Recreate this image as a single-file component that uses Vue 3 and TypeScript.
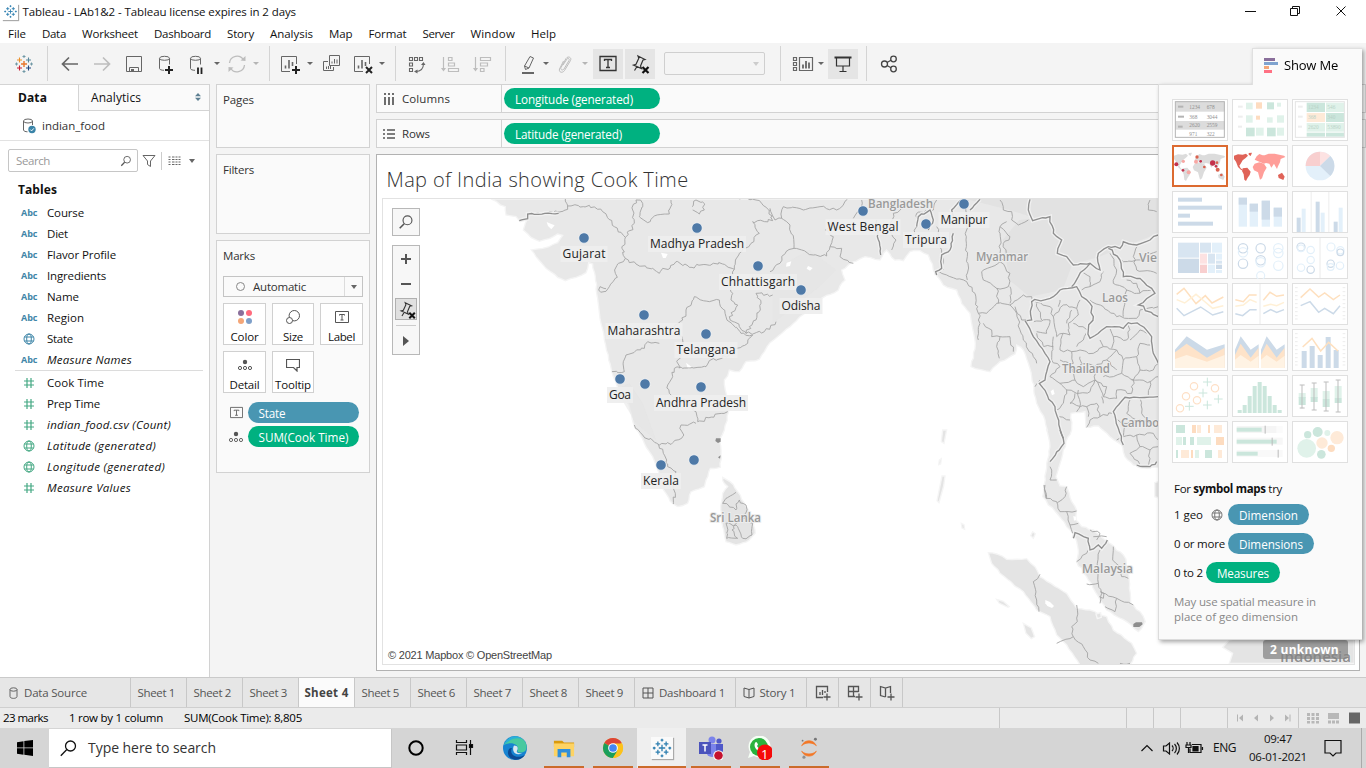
<script setup lang="ts">
type Pt = [number, number]

// Spreads the letters of an element so that its text takes the given width.
const vFit = {
  mounted(el: HTMLElement, b: { value: number }) {
    const n = (el.textContent || '').trim().length
    const w = el.getBoundingClientRect().width
    if (b.value && n) el.style.letterSpacing = ((b.value - w) / n).toFixed(3) + 'px'
  },
}

const menus: [string, number][] = [
  ['File', 18], ['Data', 24], ['Worksheet', 56], ['Dashboard', 57], ['Story', 27], ['Analysis', 43],
  ['Map', 23.5], ['Format', 38], ['Server', 32], ['Window', 44.5], ['Help', 25],
]

interface Tool { id: string; w: number; dim?: boolean; on?: boolean }
const tools: Tool[] = [
  { id: 'logo', w: 47 }, { id: 'sep', w: 1 }, { id: 'gap', w: 6 },
  { id: 'back', w: 32 }, { id: 'forward', w: 32, dim: true }, { id: 'save', w: 32 }, { id: 'dbplus', w: 32 },
  { id: 'dbpause', w: 30 }, { id: 'gap', w: 1 }, { id: 'caret', w: 8 }, { id: 'refresh', w: 31, dim: true }, { id: 'caret', w: 8, dim: true },
  { id: 'gap', w: 9 }, { id: 'sep', w: 1 }, { id: 'gap', w: 5 },
  { id: 'newsheet', w: 30 }, { id: 'gap', w: 1 }, { id: 'caret', w: 8 }, { id: 'dup', w: 34 }, { id: 'clear', w: 29 }, { id: 'gap', w: 1 }, { id: 'caret', w: 8 },
  { id: 'gap', w: 9 }, { id: 'sep', w: 1 }, { id: 'gap', w: 5 },
  { id: 'swap', w: 32 }, { id: 'sortup', w: 33, dim: true }, { id: 'sortdown', w: 32, dim: true },
  { id: 'gap', w: 7 }, { id: 'sep', w: 1 }, { id: 'gap', w: 6 },
  { id: 'pen', w: 31 }, { id: 'caret', w: 6 }, { id: 'clip', w: 32, dim: true }, { id: 'caret', w: 8, dim: true },
  { id: 'gap', w: 4 }, { id: 'label', w: 30, on: true }, { id: 'gap', w: 2 }, { id: 'pin', w: 30, on: true },
  { id: 'gap', w: 9 }, { id: 'combo', w: 101 }, { id: 'gap', w: 15 }, { id: 'sep', w: 1 }, { id: 'gap', w: 7 },
  { id: 'cards', w: 30 }, { id: 'caret', w: 6 }, { id: 'gap', w: 4 }, { id: 'present', w: 30, on: true },
  { id: 'gap', w: 8 }, { id: 'sep', w: 1 }, { id: 'gap', w: 7 }, { id: 'share', w: 30 },
]

interface Field { t: string; w: number; k: string; i?: boolean }
const dims: Field[] = [
  { t: 'Course', w: 37, k: 'abc' }, { t: 'Diet', w: 21, k: 'abc' }, { t: 'Flavor Profile', w: 69, k: 'abc' },
  { t: 'Ingredients', w: 59, k: 'abc' }, { t: 'Name', w: 32, k: 'abc' }, { t: 'Region', w: 37, k: 'abc' },
  { t: 'State', w: 26, k: 'globe' }, { t: 'Measure Names', w: 85, k: 'abc', i: true },
]
const meas: Field[] = [
  { t: 'Cook Time', w: 57, k: 'hash' }, { t: 'Prep Time', w: 53, k: 'hash' },
  { t: 'indian_food.csv (Count)', w: 124, k: 'hash', i: true }, { t: 'Latitude (generated)', w: 109, k: 'globe', i: true },
  { t: 'Longitude (generated)', w: 118, k: 'globe', i: true }, { t: 'Measure Values', w: 84, k: 'hash', i: true },
]
const marks: [string, string, number][] = [
  ['color', 'Color', 28], ['size', 'Size', 20], ['tbox', 'Label', 27], ['detail', 'Detail', 30], ['tip', 'Tooltip', 36],
]
const sheets = [1, 2, 3, 4, 5, 6, 7, 8, 9]

// ---- Map geometry: thirds of a pixel, measured from the sheet's corner ----
function pts(s: string, dx = 0, dy = 0): Pt[] {
  return s.trim().split(/\s+/).map((p) => {
    const [x, y] = p.split(',').map(Number)
    return [x + dx, y + dy] as Pt
  })
}
let seed = 7
function rnd() {
  seed = (seed * 16807) % 2147483647
  return seed / 2147483647 - 0.5
}
function rough(list: Pt[], step: number, amp: number): string {
  let d = `M${list[0][0]} ${list[0][1]}`
  for (let i = 1; i < list.length; i++) {
    const [ax, ay] = list[i - 1]
    const [bx, by] = list[i]
    const len = Math.hypot(bx - ax, by - ay)
    const n = Math.max(1, Math.round(len / step))
    for (let k = 1; k < n; k++) {
      d += `L${(ax + ((bx - ax) * k) / n + rnd() * amp).toFixed(1)} ${(ay + ((by - ay) * k) / n + rnd() * amp).toFixed(1)}`
    }
    d += `L${bx} ${by}`
  }
  return d
}
const E = 1182
const S = 1452
const mainland = rough([
  ...pts(`345,27 362,35 388,50 390,75 420,80 430,92 455,85 448,100 442,120 465,142 490,154 520,146 545,132 560,136 545,158 500,175
    466,180 480,200 510,235 545,262 568,272 600,262 630,248 638,218 650,222 658,260 662,310 668,350 675,400 685,450 698,510 708,548 722,585
    745,620 762,660 772,700 805,760 830,800 850,860 870,910 892,942 905,950 935,940 945,905 985,890 990,870 1003,835 1033,832
    1035,795 1030,750 1045,720 1058,665 1048,600 1045,570 1060,540 1090,545 1110,515 1150,508 1165,485`),
  ...pts(`0,458 60,410 120,355 155,325 205,300 225,270 215,240 235,225 285,200 330,210 350,180 375,210 400,212 420,185 450,182 475,195
    490,240 520,285 560,300 575,340 600,370 605,400 616,460 603,530 660,545 690,515 735,492 740,465 760,480 775,520 785,560 800,640
    825,690 832,720`, E),
  ...pts(`560,0 570,50 560,100 556,150 548,200 565,225 595,255 620,290 645,320 655,360 650,395 685,450 715,500 740,540 800,575 835,605
    856,575 840,545 812,520 808,420 790,375 740,335 700,300 665,290 648,270 650,240 635,215 620,170 600,168 588,140 610,60 635,0`, S, 720),
  ...pts('905,720 903,670 945,665 948,712 985,708 1020,740 1055,765 1065,800 1090,825 1130,835 1185,830 1185,27', E),
], 14, 5) + 'Z'
const islands = [
  rough(pts('1040,862 1062,875 1085,905 1110,950 1130,985 1138,1030 1120,1050 1080,1065 1050,1055 1040,1010 1034,960 1040,910 1055,890 1040,872'), 12, 4) + 'Z',
  rough(pts(`385,368 410,372 440,388 500,386 525,410 540,440 620,490 650,535 690,540 740,560 760,600 815,640 830,670 810,705 660,705 620,645
    590,615 570,560 530,540 490,485 420,430 395,400`, S, 720), 14, 4) + 'Z',
  'M1970 1025l8 6-6 14-8-8z', 'M1698 858l9 0-4 30-14 50-6-6z', 'M1700 720l12 0-8 40-8-5z', 'M1690 810l6-4-2 16-6 2z', 'M1756 1000l8 4 2 14-8-4z',
  'M1862 1228l20 6 18 16-4 2-26-12z', 'M1942 1300l24 14 10 26-10 6-16-16z', 'M2160 1272l14-4 2 14-12 4z',
  'M2612 1340L2660 1344 2700 1336 2735 1345 2935 1345 2935 1420 2560 1420 2570 1390 2540 1372 2560 1350z',
  'M2336 878l12-4v50l-12-4z',
]
const holes = [
  'M512 96l14 6 10 4-10 12-10-10z', 'M855 188l20 4-6 12-8 0z', 'M930 518l18 14-12 6z', 'M1232 218l14-4-4 14-12 2z', 'M1296 228l14 6-8 8-10-6z',
  'M2008 1230l14 6 12 12-6 6-14-6-6-8z', 'M2024 604l8-6 4 14-8 4z', 'M2092 978l8 2 0 10-6 2z',
]
const states = [
  '430,92 452,88 455,70 500,70 550,66 575,58 568,27', '575,48 640,46 680,65 715,110 748,142 738,175 748,205 725,222 718,250 724,262 700,290 690,304 668,300 672,290 690,296',
  '748,142 775,100 770,60 780,30 800,40 790,80 815,98 835,78 880,72 885,30', '748,205 780,222 830,235 850,250 900,215 940,232 990,224 1040,222 1075,238 1090,190 1125,160 1150,130 1130,95 1190,92 1180,60 1140,30 1090,27',
  '948,50 960,30 980,36 985,60 970,72 950,60', '1075,238 1055,275 1070,310 1065,330 1085,345 1060,380 1090,410 1110,430 1140,390 1155,340 1140,310 1190,315',
  '1110,430 1165,425 1200,395', '955,320 1000,335 1030,330 1050,380 1095,430 1130,435 1115,460 1080,475 1060,495 1000,512 990,530 920,535 895,535 890,560 875,585 880,610',
  '955,320 930,360 920,390 895,410 920,450 915,490 905,510 910,535', '850,460 815,455 805,475 750,495 742,515 745,545 708,545', '880,610 940,640 960,665 965,695 1055,665', '775,705 800,735 850,765 890,758 920,740 915,705 960,700',
  '848,765 862,790 875,830 900,845 893,880 898,910 892,942', '1080,907 1050,925 1040,940 1080,960 1090,930 1110,945 1105,985 1080,1000 1068,1020 1085,1045', '1105,985 1130,1000 1128,1035 1100,1045 1085,1010 1050,1000 1052,1045 1085,1045',
]
const eastStates = [
  '0,55 15,90 35,85 40,50 100,60 150,50 200,60 232,28', '35,85 60,105 72,175 48,185 30,220 0,245', '72,175 130,195 170,198 180,170 215,175 210,200 250,220', '180,170 190,140 165,120 185,95', '250,85 270,60 275,30',
  '365,180 378,150 360,120 370,70 400,50 400,30', '420,160 440,110 440,70 490,60 500,30', '500,110 515,190 520,240', '590,30 588,150 592,200 592,270', '497,245 530,255 590,275 615,310 625,370 650,370 680,340 720,345 760,315 785,320 785,350', '625,370 630,400 625,450',
  '640,400 665,420 665,440 690,440 720,440 730,485', '690,440 680,470 688,505', '690,30 700,60 725,65 725,90 745,105 775,90', '690,200 690,110 710,95', '690,110 720,140 700,160 712,200 690,215 720,250 715,290 680,295 640,270 635,245 690,215', '680,295 685,340',
  '720,345 740,370 760,450 790,500 800,520', '720,290 720,340', '735,350 755,390 770,390', '790,330 840,350 850,380 880,345 920,355 930,330', '790,395 840,390 830,430 800,425', '850,380 860,440 880,430 900,435 895,400 925,375 920,355', '850,440 845,510', '880,430 870,480 905,485 910,520 870,510', '910,400 960,420 940,450 920,470',
  '905,485 930,480 970,490 1000,470 990,450', '845,510 870,530 840,560 870,580 915,570 905,540 940,520 975,530 975,570 940,590 915,570', '870,580 890,600 880,640 860,660', '890,600 920,610 960,605 975,570 1000,620 1040,625', '915,610 900,640 950,650 980,640 990,680 1030,670', '925,600 930,650 920,665', '990,680 960,690 950,712', '1010,410 1030,440 1070,450 1080,400',
  '1000,470 1040,480 1060,510 1100,500 1110,460 1150,470', '1060,510 1055,550 1090,570 1110,540 1100,500', '1110,540 1150,540 1165,520', '1090,570 1085,610 1040,600 1040,625', '1085,570 1140,575 1165,560', '1140,575 1135,615', '975,530 1010,510 1040,480', '1080,450 1110,420 1130,430',
  '935,300 960,290 990,275 1000,245', '930,240 960,260 960,290', '960,330 1000,350 1040,380 1100,385 1110,360 1165,350', '1020,190 1040,240 1030,280 1070,300 1065,330 1060,380', '1070,300 1100,310 1150,300', '1070,270 1100,280 1110,310', '1035,190 1060,215 1100,210 1160,185', '1110,160 1090,200 1100,240 1160,250', '1140,30 1135,60 1160,65',
  '1030,680 1060,700 1060,740 1040,750', '1060,700 1100,690 1140,700 1165,690', '1080,630 1070,670 1100,690', '1110,625 1115,670 1140,700', '1060,740 1100,735 1110,770 1080,790 1110,825', '1100,735 1150,730 1165,750', '1110,770 1140,780 1165,770', '1140,780 1135,830', '860,680 900,690', '795,590 810,570',
  '800,430 820,470 850,470', '930,500 935,520', '1030,440 1025,475', '1000,560 1030,560 1055,550', '1000,620 1010,590 975,570', '1040,540 1010,510', '950,650 955,680', '1000,640 995,620', '800,340 815,390', '905,360 890,400', '870,330 865,350',
]
const southStates = [
  '570,110 575,130 570,150 590,150', '555,165 558,205 590,215 600,245 650,243', '620,170 615,200 592,218', '620,245 630,285 655,280', '630,285 638,310', '560,205 552,165', '650,395 680,370 690,355', '720,360 712,400 715,460 680,462', '715,460 725,490 720,520', '725,488 770,505 820,525',
  '770,505 765,545 735,530', '760,350 758,390 780,410 785,440 805,445', '690,300 720,310 710,330', '700,320 740,320', '540,433 520,455 530,510 537,545', '650,525 652,575 635,590 640,620 590,640', '640,620 670,650 690,690 715,700', '780,700 810,700', '720,485 732,490 730,505 718,500',
]
const nations = [
  rough(pts('780,28 775,60 788,92 840,80 850,130 875,150 862,190 890,200 910,225 960,220 990,240 985,190 1015,170 1050,175 1060,155 1100,165 1140,150 1165,135', E), 14, 8),
  rough(pts('770,392 785,390 785,335 850,320 870,300 920,290 935,320 960,340 970,380 955,420 960,445 1010,410 1060,415 1075,398 1110,405 1145,440 1150,490 1165,520', E), 14, 8),
  rough(pts('1015,175 1050,210 1060,260 1110,265 1145,295 1155,310 1105,345 1165,380', E), 14, 8), rough(pts('960,220 925,260 905,290', E), 12, 6),
  rough(pts('765,392 790,440 825,490 840,515 825,570 808,580 855,650 880,745', E), 14, 6), rough(pts('600,0 612,40 570,95', S, 720), 12, 4), rough(pts('640,325 645,308 685,325 690,360 715,345 725,355 742,330', S, 720), 10, 5),
  rough(pts('1165,620 1065,622 1030,665 1045,715 1060,765', E), 14, 5), rough(pts('320,90 322,140 332,195', E), 10, 6), rough(pts('550,130 540,180 515,195 515,235 497,245 500,255', E), 10, 6), rough(pts('560,100 545,60 575,30', E), 10, 5), rough(pts('600,60 630,28', E), 10, 5),
  rough(pts('440,110 445,80 480,60 490,90 475,120', E), 10, 6), rough(pts('430,92 455,86 455,72 548,70', 0), 10, 4), rough(pts('830,105 870,110 890,95', S, 720), 10, 6),
]
const lines = [
  ...states.map((s) => rough(pts(s), 9, 10)), ...eastStates.map((s) => rough(pts(s, E), 11, 8)), ...southStates.map((s) => rough(pts(s, S, 720), 12, 6)),
]
const places: [string, number, number, number][] = [
  ['Bangladesh', 868, 208, 65], ['Myanmar', 976, 261, 52], ['Laos', 1102, 302, 26], ['Vie', 1139, 262, 18], ['Thailand', 1062, 373, 48],
  ['Cambo', 1121, 427, 38], ['Sri Lanka', 710, 522, 51], ['Malaysia', 1082, 573, 51], ['Indonesia', 1280, 662, 71],
]
// name, dot x, dot y, text width
const dots: [string, number, number, number][] = [
  ['Gujarat', 584, 238, 43], ['Madhya Pradesh', 697, 228, 94], ['Chhattisgarh', 758, 266, 74], ['Odisha', 801, 290, 39], ['West Bengal', 863, 211, 71],
  ['Tripura', 926, 224, 42], ['Manipur', 964, 204, 47], ['Maharashtra', 644, 315, 73], ['Telangana', 706, 334, 59], ['Goa', 620, 379, 22],
  ['', 645, 384, 0], ['Andhra Pradesh', 701, 387, 90], ['Kerala', 661, 465, 36], ['', 694, 460, 0],
]

// ---- Show Me thumbnails, each on a 168 × 126 grid ----
type R = [number, number, number, number, string]
const B = '#ccdae8', L = '#e3f0fa', G = '#cbe6dc', g = '#e0f2ea', O = '#fddcc0', o = '#feead8', P = '#f8cfcf', p = '#fde2e2'
const rects: Record<number, R[]> = {
  0: [[10, 8, 148, 30, '#dcdcdc'], [10, 66, 148, 26, '#dcdcdc'], [18, 20, 16, 6, '#b4b4b4'], [18, 50, 18, 6, '#b4b4b4'], [18, 80, 14, 6, '#b4b4b4']],
  1: [[18, 20, 14, 6, '#eee'], [18, 50, 14, 6, '#eee'], [18, 80, 12, 6, '#eee'], [42, 11, 20, 20, g], [72, 10, 18, 19, O], [105, 10, 21, 21, G], [135, 11, 12, 12, g], [42, 49, 20, 22, g], [72, 50, 12, 12, O], [105, 55, 17, 16, g], [135, 49, 21, 22, g], [42, 86, 26, 26, G], [72, 86, 23, 24, g], [105, 86, 26, 26, G], [135, 86, 21, 24, g]],
  2: [[18, 20, 14, 6, '#eee'], [18, 50, 14, 6, '#eee'], [18, 80, 12, 6, '#eee'], [44, 11, 55, 28, G], [102, 11, 54, 28, g], [44, 42, 55, 27, o], [102, 42, 54, 27, G], [44, 72, 55, 26, g], [102, 72, 54, 26, g], [44, 101, 55, 12, G], [102, 101, 54, 12, G]],
  6: [[18, 20, 72, 12, B], [18, 44, 132, 12, B], [18, 68, 36, 12, B], [18, 92, 105, 12, B]],
  7: [[20, 20, 25, 87, L], [20, 20, 25, 21, B], [53, 38, 25, 69, L], [53, 38, 25, 24, B], [89, 29, 25, 78, L], [89, 29, 25, 57, B], [125, 50, 25, 57, L], [125, 50, 25, 27, B]],
  8: [[56, 3, 3, 120, '#eee'], [109, 3, 3, 120, '#eee'], [14, 80, 12, 43, B], [29, 53, 12, 70, L], [71, 32, 12, 91, B], [86, 65, 12, 58, L], [125, 92, 12, 31, B], [140, 50, 12, 73, L]],
  9: [[18, 17, 63, 45, '#d8e5f1'], [18, 65, 63, 43, B], [84, 17, 33, 30, '#d8e5f1'], [120, 17, 30, 30, L], [84, 50, 21, 30, p], [108, 50, 21, 30, '#d8e5f1'], [132, 50, 18, 18, L], [132, 71, 18, 9, '#d8e5f1'], [84, 83, 21, 25, P], [108, 83, 21, 25, L], [132, 83, 18, 13, B], [132, 99, 18, 9, L]],
  17: [[29, 66, 15, 51, B], [53, 51, 15, 66, B], [77, 78, 15, 39, B], [101, 24, 15, 93, B], [125, 63, 15, 54, B]],
  19: [[17, 105, 12, 9, G], [32, 90, 12, 24, G], [47, 63, 12, 51, G], [62, 33, 12, 81, G], [77, 21, 12, 93, G], [92, 33, 12, 81, G], [107, 63, 12, 51, G], [122, 90, 12, 24, G], [137, 105, 12, 9, G]],
  20: [[20, 54, 21, 15, g], [20, 66, 21, 24, G], [56, 39, 21, 30, g], [56, 66, 21, 15, G], [92, 48, 21, 24, g], [92, 72, 21, 24, G], [128, 33, 21, 36, g], [128, 69, 21, 15, G]],
  21: [[12, 12, 27, 24, G], [60, 12, 12, 24, O], [75, 12, 12, 24, o], [108, 12, 6, 24, O], [126, 12, 24, 24, o], [12, 48, 18, 24, g], [33, 48, 9, 24, G], [54, 48, 12, 24, G], [75, 48, 42, 24, g], [132, 48, 24, 24, O], [12, 87, 6, 24, G], [27, 87, 24, 24, o], [57, 87, 6, 24, O], [69, 87, 12, 24, g], [99, 87, 21, 24, G], [138, 87, 12, 24, o]],
  22: [[14, 15, 120, 21, '#f5f5f5'], [134, 15, 18, 21, '#fbfbfb'], [14, 50, 138, 21, '#f7f7f7'], [14, 87, 138, 21, '#f9f9f9'], [14, 20, 75, 12, G], [14, 56, 120, 12, G], [14, 92, 63, 12, G], [98, 14, 3, 24, '#bbb'], [119, 50, 3, 24, '#bbb'], [137, 86, 3, 24, '#bbb']],
}
type Ln = [string, string]
const strokes: Record<number, Ln[]> = {
  12: [['14,34 36,16 72,62 100,38 120,60 154,42', '#fee0bf'], ['14,50 38,60 72,34 96,54 122,76 154,68', '#fff0d6'], ['14,76 36,98 86,72 122,96 154,86', B]],
  13: [['10,50 34,56 52,36 74,36', '#fee0bf'], ['94,52 114,28 134,40 156,36', '#fee0bf'], ['10,70 34,66 54,50 74,58', '#fff0d6'], ['94,70 116,64 134,68 156,58', '#fff0d6'], ['10,92 32,98 54,80 74,80', B], ['94,92 116,80 134,88 156,80', B]],
  14: [['26,44 54,18 80,42 98,30 124,50 144,36', '#fee0bf'], ['26,68 54,56 80,88 98,76 124,92 144,68', B]],
  17: [['32,54 60,28 86,66 110,40 138,66', '#fee0bf']],
}
const areas: Record<number, Ln[]> = {
  15: [['9,62 44,22 105,62 158,46 158,117 9,117', B], ['9,70 44,44 105,86 158,56 158,117 9,117', '#fee3c9'], ['9,90 44,78 105,98 158,78 158,117 9,117', '#fff3e4']],
  16: [['9,62 26,22 56,62 80,46 80,117 9,117', B], ['87,62 104,22 134,62 158,46 158,117 87,117', B], ['9,78 26,44 56,86 80,56 80,117 9,117', '#fee3c9'], ['87,78 104,44 134,86 158,56 158,117 87,117', '#fee3c9'], ['9,92 26,78 56,98 80,80 80,117 9,117', '#fff3e4'], ['87,92 104,78 134,98 158,80 158,117 87,117', '#fff3e4']],
}
type C = [number, number, number, string]
const rings: Record<number, C[]> = {
  10: [[33, 34, 14, B], [33, 46, 14, L], [86, 34, 14, B], [139, 34, 14, L], [139, 48, 14, L], [33, 80, 14, B], [86, 70, 14, B], [86, 76, 14, L], [139, 86, 14, L], [86, 116, 12, L]],
  11: [[27, 30, 12, B], [27, 34, 10, L], [56, 39, 11, L], [117, 30, 12, L], [145, 40, 11, L], [145, 46, 10, B], [56, 69, 11, L], [27, 92, 11, L], [56, 98, 11, B], [116, 80, 11, B], [144, 86, 11, L], [116, 90, 10, L]],
  18: [[66, 34, 11, '#fee0c6'], [129, 40, 11, '#fee0c6'], [42, 64, 11, '#fee0c6'], [75, 76, 11, '#fee0c6'], [24, 100, 11, '#fee0c6']],
}
const discs: Record<number, C[]> = {
  3: [[13, 58, 6, '#c4314b'], [34, 49, 5, '#f7a8a4'], [75, 36, 5, '#d9624f'], [72, 50, 6, '#f7a8a4'], [86, 49, 4, '#c4314b'], [122, 54, 8, '#c4314b'], [135, 53, 4, '#d9624f'], [137, 74, 6, '#d9624f'], [132, 64, 4, '#c4314b'], [148, 90, 4, '#d9624f'], [97, 66, 4, '#d9624f'], [33, 76, 4, '#c4314b'], [50, 82, 6, '#f7a8a4']],
  23: [[44, 82, 28, g], [47, 41, 11, G], [77, 33, 15, G], [106, 36, 9, g], [135, 50, 20, o], [90, 66, 17, '#feead8'], [118, 82, 11, O], [88, 100, 13, G]],
}
const crosses: Pt[] = [[106, 21], [93, 54], [139, 72], [52, 94], [106, 90]]
const continents = [
  'M6 32l12-4 14 1 10-3 6 6-8 8-8 6-6 10-4 6 4 8 6 4-4 2-10-10-6-16-6-8z', 'M50 24l10-1-4 10-6-4z', 'M32 70l14-2 10 12-3 10-6 8-5 10-5-4-2-16-5-10z',
]
const continents2 = [
  'M68 44l6-10 8-7 10 4 6 0 12-5 18 0 28 6 4 4-14 6-2 10-6 12-3 8-5-8-4-8-8 12-6-12-10-2-6 2z', 'M68 56l14-4 14 4 8 12-8 14-6 18-6 4-6-22-12-6-4-10z', 'M138 90l12-7 8 12-4 10-14-6z',
]
const ticks = [14, 26, 38, 50, 62, 74, 86, 98, 108]
const apps: [string, boolean][] = [['edge', false], ['folder', true], ['chrome', true], ['tableau', true], ['teams', true], ['whatsapp', true], ['jupyter', true]]
</script>

<template>
  <div class="screen">
    <svg class="defs">
      <symbol id="logo" viewBox="0 0 24 24">
        <path d="M9 12h6M12 9v6" stroke="#e8762c" stroke-width="1.4" />
        <path d="M5 8h5M7.5 5.5v5" stroke="#eb912c" stroke-width="1.1" /><path d="M14 8h5M16.500 5.500v5" stroke="#59879b" stroke-width="1.1" />
        <path d="M5 16h5M7.500 13.500v5" stroke="#c72035" stroke-width="1.1" /><path d="M14 16h5M16.500 13.500v5" stroke="#1f457e" stroke-width="1.1" />
        <path d="M10.500 4.500h3M12 3v3M10.500 19.500h3M12 18v3M3 12h3M4.500 10.500v3M18 12h3M19.500 10.500v3" stroke="#7199a6" stroke-width="1" />
      </symbol>
      <symbol id="logoblue" viewBox="0 0 24 24">
        <g stroke="#2e7fb0" stroke-width="1.400"><path d="M8.500 12h7M12 8.500v7M5 7.500h5M7.500 5v5M14 7.500h5M16.500 5v5M5 16.500h5M7.500 14v5M14 16.500h5M16.500 14v5M10.500 3.500h3M12 2v3M10.500 20.500h3M12 19v3M2 12h3M3.500 10.500v3M19 12h3M20.500 10.500v3" /></g>
      </symbol>
      <symbol id="back" viewBox="0 0 24 24"><path d="M4.500 12H20M11 5.500L4.500 12l6.500 6.500" stroke-width="1.700" /></symbol>
      <symbol id="forward" viewBox="0 0 24 24"><path d="M19.500 12H4M13 5.500l6.500 6.500-6.500 6.500" stroke-width="1.700" /></symbol>
      <symbol id="save" viewBox="0 0 24 24"><path d="M4.500 4.500h15v15h-15zM7.500 19.500v-4h9v4" /><path d="M9 17h3v3H9z" fill="currentColor" stroke="none" /></symbol>
      <symbol id="cyl" viewBox="0 0 24 24"><path d="M5.500 6.500v10c0 1 2 1.800 4.500 1.800M15.500 6.500v6" /><ellipse cx="10.500" cy="6.300" rx="5" ry="2" /></symbol>
      <symbol id="dbplus" viewBox="0 0 24 24"><use href="#cyl" /><path d="M15 14v8M11 18h8" stroke="#222" stroke-width="2" /></symbol>
      <symbol id="dbpause" viewBox="0 0 24 24"><use href="#cyl" /><path d="M13 15.500v6.500M16.500 15.500v6.500" stroke="#222" stroke-width="1.800" /></symbol>
      <symbol id="refresh" viewBox="0 0 24 24"><path d="M4.500 11A7.500 7.500 0 0 1 18.500 8M19.500 13A7.500 7.500 0 0 1 5.500 16" stroke-width="1.300" /><path d="M15.500 8.500l5 .5V4zM8.500 15.500l-5-.5V20z" fill="currentColor" stroke="none" /></symbol>
      <symbol id="sheetbox" viewBox="0 0 24 24"><path d="M12 19.500H3.500v-15h15V12" /><path d="M7.500 16.500v-3M11 16.500V8M14.500 14v-4" stroke-width="1.600" /></symbol>
      <symbol id="newsheet" viewBox="0 0 24 24"><use href="#sheetbox" /><path d="M18 14v8M14 18h8" stroke="#222" stroke-width="2" /></symbol>
      <symbol id="clear" viewBox="0 0 24 24"><use href="#sheetbox" /><path d="M15 15l6 6M21 15l-6 6" stroke="#222" stroke-width="2" /></symbol>
      <symbol id="dup" viewBox="0 0 24 24"><path d="M10.500 3.500h10v10h-10zM9 9.500H4.500v9h10v-3.500M13 11.500v-2M15.500 11.500V7M18 11.500v-4M7.500 17v-2.500M9.500 17v-3M11.500 17v-3" /></symbol>
      <symbol id="swap" viewBox="0 0 24 24"><path d="M4.500 5.500h3v3h-3zM9.500 5.500h3v3h-3zM14.500 5.500h3v3h-3zM4.500 11h3v3h-3zM4.500 16.500h3v3h-3zM10.500 19.500c5 0 8-3 8-8" stroke-width="1.100" /><path d="M16 13l2.500-3 2 3zM12.500 17.500l-3.500 2 3.500 2z" fill="currentColor" stroke="none" /></symbol>
      <symbol id="sortup" viewBox="0 0 24 24"><path d="M5.500 5v13M10.500 5.500h3.500v3h-3.500zM10.500 11h6v3h-6zM10.500 16.500h10v3h-10z" stroke-width="1.200" /><path d="M3 16h5l-2.500 3.500z" fill="currentColor" stroke="none" /></symbol>
      <symbol id="sortdown" viewBox="0 0 24 24"><path d="M5.500 5v13M10.500 5.500h10v3h-10zM10.500 11h7v3h-7zM10.500 16.500h3.500v3h-3.500z" stroke-width="1.200" /><path d="M3 16h5l-2.500 3.500z" fill="currentColor" stroke="none" /></symbol>
      <symbol id="pen" viewBox="0 0 24 24"><path d="M14 4.500l3.500 1.500-4.500 10-3.500 1.500-1-3.500zM8.500 14l4.500 2" /><path d="M6 21h12" stroke-width="2" /></symbol>
      <symbol id="clip" viewBox="0 0 24 24"><path d="M10 13l4-6c1-1.500 3 0 2 1.500l-5 8.500c-1.500 2-4 .5-3-1.500l5-9c2-3 6-1 4.500 2l-6 10c-2 3-6 2-5-1.500l4-8" /></symbol>
      <symbol id="label" viewBox="0 0 24 24"><path d="M4 4.500h16v14H4z" stroke="#333" stroke-width="1.300" /><path d="M8.500 9V7.500h7V9M12 7.500V15.500M10 15.500h4" stroke="#333" stroke-width="1.300" /></symbol>
      <symbol id="pin" viewBox="0 0 24 24"><path d="M10 4l7 3.500-2 .5-2.500 6 1 2.500-8-3.500 2.500-.8 2.800-6zM9 14.500L6.500 18.500" stroke="#333" stroke-width="1.200" /><path d="M14.500 15l6 6M20.500 15l-6 6" stroke="#111" stroke-width="2.200" /></symbol>
      <symbol id="cards" viewBox="0 0 24 24"><path d="M2.500 5.500h3v3h-3zM2.500 10.500h3v3h-3zM2.500 15.500h3v3h-3zM8.500 5.500h13v13h-13z" stroke-width="1.200" /><path d="M12 16.500v-4M15 16.500V9M18 16.500v-6" stroke-width="1.800" /></symbol>
      <symbol id="present" viewBox="0 0 24 24"><path d="M5.500 5.500v8.500h13V5.500M12 14v5M8.500 19.500h7" stroke="#333" stroke-width="1.200" /><path d="M3.500 5.500h17" stroke="#333" stroke-width="2" /></symbol>
      <symbol id="share" viewBox="0 0 24 24"><g stroke="#444" stroke-width="1.300"><circle cx="7.500" cy="12" r="3" /><circle cx="16.500" cy="7" r="2.800" /><circle cx="16.500" cy="17" r="2.800" /><path d="M10 10.500l4-2.200M10 13.500l4 2.200" /></g></symbol>
      <symbol id="globe" viewBox="0 0 12 12"><circle cx="6" cy="6" r="5" /><ellipse cx="6" cy="6" rx="2.300" ry="5" /><path d="M1.500 4h9M1.500 8h9" /></symbol>
      <symbol id="hash" viewBox="0 0 12 12"><path d="M4 1v10M8 1v10M1 4h10M1 8h10" stroke-width="1.200" /></symbol>
      <symbol id="mag" viewBox="0 0 14 14"><circle cx="8.300" cy="5.500" r="3.900" /><path d="M5.400 8.500L1.500 12.500" stroke-width="1.400" /></symbol>
      <symbol id="tbox" viewBox="0 0 14 14"><path d="M.5 1.500h13v11H.5zM4.500 5.500v-1h5v1M7 4.500v5.500M5.500 10h3" /></symbol>
      <symbol id="detail" viewBox="0 0 14 14"><circle cx="7" cy="4" r="2.200" fill="#555" stroke="none" /><circle cx="2" cy="10" r="1.600" /><circle cx="7" cy="10" r="1.600" /><circle cx="12" cy="10" r="1.600" /></symbol>
      <symbol id="color" viewBox="0 0 14 14"><g stroke="none"><circle cx="3" cy="3" r="3" fill="#8a6f9b" /><circle cx="11" cy="3" r="3" fill="#ff6b7d" /><circle cx="3" cy="11" r="3" fill="#f4a678" /><circle cx="11" cy="11" r="3" fill="#7e9fc9" /></g></symbol>
      <symbol id="size" viewBox="0 0 14 14"><circle cx="8.300" cy="5.700" r="5.200" /><circle cx="3.500" cy="10.500" r="3" fill="#fff" /></symbol>
      <symbol id="tip" viewBox="0 0 14 14"><path d="M.5 1.500h13v8H11v3.500L7.500 9.500H.5z" stroke-width="1.200" /></symbol>
      <symbol id="grid4" viewBox="0 0 12 12"><path d="M1 1h10v10H1zM6 1v10M1 6h10" /></symbol>
      <symbol id="book" viewBox="0 0 12 12"><path d="M6 2.500L1 1v8.500L6 11l5-1.500V1zM6 2.500V11" /></symbol>

      <symbol id="edge" viewBox="0 0 24 24">
        <circle cx="12" cy="12" r="12" fill="#1783d1" /><path d="M1 9C4-1 20-3 23.500 9c1 6-3 8-7 7.500-3-.5-2-2-1.500-4C15 8 8 5 1 9z" fill="#48c9a0" /><path d="M1 9C4 0 14-2 19 3 12 1 6 4 1 9z" fill="#2ab0d8" /><path d="M9 12c-3 6 3 12 13 7-5 8-18 5-17-3 .3-3 2-4.500 4-4z" fill="#0c4a93" /><path d="M11 9.500c4 0 4.500 3 3 5-1 2 1 3 5 2.500-6 4-11-2-8-7.500z" fill="#d8e8f0" />
      </symbol>
      <symbol id="folder" viewBox="0 0 24 24"><path d="M1 4h9l2 2h11v5H1z" fill="#d99a0c" /><path d="M1 7h22v14H1z" fill="#fdd363" /><path d="M5 13h14v9h-4v-5H9v5H5z" fill="#2f8fdb" /></symbol>
      <symbol id="chrome" viewBox="0 0 24 24"><circle cx="12" cy="12" r="11" fill="#fbc11b" /><path d="M12 12L2.500 6.500A11 11 0 0 1 21.500 6.500z" fill="#dc4437" /><path d="M12 12L2.500 6.500A11 11 0 0 0 12 23l5-8z" fill="#1a9f5c" /><path d="M12 7h9.800A11 11 0 0 1 12 23l5-8z" fill="#fcc21b" /><circle cx="12" cy="12" r="5.300" fill="#fff" /><circle cx="12" cy="12" r="4.200" fill="#4586f3" /></symbol>
      <symbol id="teams" viewBox="0 0 24 24"><circle cx="13" cy="4" r="3.500" fill="#7b83eb" /><circle cx="20" cy="5" r="2.600" fill="#5059c9" /><path d="M7 8h12v7a6 6 0 0 1-12 0z" fill="#7b83eb" /><path d="M17 8h7v6a4 4 0 0 1-7 3z" fill="#5059c9" /><path d="M0 6h12v12H0z" fill="#4b53bc" /><path d="M3.500 9h5M6 9v6.500" stroke="#fff" stroke-width="1.500" /><circle cx="19.500" cy="19.500" r="5.300" fill="#fff" /><circle cx="19.500" cy="19.500" r="4.300" fill="#c4122e" /></symbol>
      <symbol id="whatsapp" viewBox="0 0 24 24"><path d="M0 22l2-6A11 11 0 1 1 6 20z" fill="#f5fff5" /><circle cx="11" cy="11" r="9" fill="#29b33e" /><path d="M7 7c1-2 2-1 3 1.500l-1 1.500c1 2 2.500 3 4 3.500l1.500-1.500c2 1 3 1.500 1 3C10 17 5 11 7 7z" fill="#fff" /><circle cx="17" cy="16.500" r="8" fill="#f50a0a" /></symbol>
      <symbol id="jupyter" viewBox="0 0 24 24"><path d="M4 9.500C6 5.500 9 4.200 12 4.200s6 1.300 8 5.300c-2-2-5-3-8-3s-6 1-8 3zM4 15.500c2 4 5 5.300 8 5.300s6-1.300 8-5.300c-2 2-5 3-8 3s-6-1-8-3z" fill="#f37726" stroke="#f37726" stroke-width=".8" /><circle cx="19" cy="2.500" r="1.600" fill="#767677" /><circle cx="6.500" cy="22" r="1.700" fill="#8f8f90" /><circle cx="5" cy="4" r="1" fill="#767677" /></symbol>
    </svg>

    <header class="titlebar">
      <span class="appicon"><svg class="ic s15"><use href="#logoblue" /></svg></span>
      <span v-fit="273.500">Tableau - LAb1&amp;2 - Tableau license expires in 2 days</span>
      <svg class="winctl" viewBox="0 0 116 22"><path d="M5 10.500h11M50.500 7.500h7v7h-7zM52.500 7.500v-2h7v7h-2M96.500 5.500l9 9M105.500 5.500l-9 9" /></svg>
    </header>
    <nav class="menubar">
      <span v-for="m in menus" :key="m[0]" class="menu" :style="{ width: m[1] + 'px' }"><span v-fit="m[1]">{{ m[0] }}</span></span>
    </nav>

    <div class="toolbar">
      <span v-for="(t, i) in tools" :key="i" class="tool" :class="[t.id, { dim: t.dim, on: t.on }]" :style="{ width: t.w + 'px' }">
        <i v-if="t.id === 'caret' || t.id === 'combo'" class="tri"></i>
        <svg v-else-if="t.id !== 'gap' && t.id !== 'sep'" class="ic s24"><use :href="'#' + t.id" /></svg>
      </span>
    </div>

    <main class="work">
      <aside class="side">
        <div class="sidetabs">
          <b class="tabdata"><span v-fit="29">Data</span></b>
          <span class="tabana"><span v-fit="50">Analytics</span><svg class="updown" viewBox="0 0 6 8"><path d="M0 3.200L3 0l3 3.200zM0 4.800L3 8l3-3.200z" /></svg></span>
        </div>
        <div class="source">
          <svg class="db" viewBox="0 0 15 16"><path d="M1.500 3v9c0 1 2 1.800 4 1.800M10.500 3v4" /><ellipse cx="6" cy="3" rx="4.500" ry="2" /><circle cx="10" cy="11.500" r="3.700" fill="#3a84a8" stroke="none" /><path d="M8.300 11.600l1.300 1.300 2.200-2.500" stroke="#fff" /></svg>
          <span v-fit="63">indian_food</span>
        </div>
        <div class="searchrow">
          <div class="search"><span v-fit="34">Search</span><svg class="ic s12"><use href="#mag" /></svg></div>
          <svg class="funnel" viewBox="0 0 14 14"><path d="M1 1.500h12L8.500 7v5.500L5.500 10.500V7z" /></svg>
          <i class="vr"></i>
          <svg class="listic" viewBox="0 0 13 10"><path d="M.5 1h2M4 1h2.500M7.500 1h2M10.500 1h2M.5 3.500h2M4 3.500h2.500M7.500 3.500h2M10.500 3.500h2M.5 6h2M4 6h2.500M7.500 6h2M10.500 6h2M.5 8.500h2M4 8.500h2.500M7.500 8.500h2M10.500 8.500h2" /></svg>
          <i class="tri big"></i>
        </div>
        <b class="tables"><span v-fit="39">Tables</span></b>
        <ul class="fields blue">
          <li v-for="f in dims" :key="f.t"><span class="kind"><b v-if="f.k === 'abc'" v-fit="16.500">Abc</b><svg v-else class="ic s12"><use :href="'#' + f.k" /></svg></span><span v-fit="f.w" :class="{ it: f.i }">{{ f.t }}</span></li>
        </ul>
        <hr />
        <ul class="fields green">
          <li v-for="f in meas" :key="f.t"><span class="kind"><svg class="ic s12"><use :href="'#' + f.k" /></svg></span><span v-fit="f.w" :class="{ it: f.i }">{{ f.t }}</span></li>
        </ul>
      </aside>

      <section class="cards-col">
        <div class="card pages"><span v-fit="31">Pages</span></div>
        <div class="card filters"><span v-fit="31">Filters</span></div>
        <div class="card marks">
          <span v-fit="32">Marks</span>
          <div class="select"><i class="ring"></i><span v-fit="53">Automatic</span><i class="drop"><i class="tri big"></i></i></div>
          <div class="markgrid">
            <div v-for="m in marks" :key="m[0]" class="mark"><svg class="ic s14"><use :href="'#' + m[0]" /></svg><span v-fit="m[2]">{{ m[1] }}</span></div>
          </div>
          <div class="enc"><svg class="ic s13"><use href="#tbox" /></svg><span class="pill dim-pill"><span v-fit="27">State</span></span></div>
          <div class="enc"><svg class="ic s14"><use href="#detail" /></svg><span class="pill"><span v-fit="90">SUM(Cook Time)</span></span></div>
        </div>
      </section>

      <section class="viewcol">
        <div class="shelf"><div class="shelfname"><svg class="sh" viewBox="0 0 12 12"><path d="M2 4v8M6 4v8M10 4v8M2 0v2M6 0v2M10 0v2" /></svg><span v-fit="48">Columns</span></div><span class="pill"><span v-fit="118">Longitude (generated)</span></span></div>
        <div class="shelf"><div class="shelfname"><svg class="sh" viewBox="0 0 12 12"><path d="M4 2h8M4 6h8M4 10h8M0 2h2M0 6h2M0 10h2" /></svg><span v-fit="28">Rows</span></div><span class="pill"><span v-fit="107">Latitude (generated)</span></span></div>
        <div class="sheet">
          <h1><span v-fit="302">Map of India showing Cook Time</span></h1>
          <div class="map">
            <svg class="canvas" viewBox="383 199 971 465">
              <g transform="translate(376 190) scale(.33333)">
                <path :d="mainland" fill="#e8e8e8" stroke="#f4f4f4" stroke-width="4" />
                <path v-for="(d, i) in islands" :key="'i' + i" :d="d" fill="#e4e4e4" stroke="#f5f5f5" stroke-width="4" />
                <path d="M1770 27L1900 60 2010 95 2050 200 2100 220 2170 200 2346 130V27H1770z" fill="#e2e2e2" />
                <path d="M1930 90L2020 80 2040 170 2090 220 2060 300 1960 320 1900 270 1880 150z" fill="#e2e2e2" />
                <path d="M720 600L780 700 840 750 800 640 760 580zM1190 240L1300 180 1380 240 1330 290 1190 400z" fill="#e4e4e4" opacity=".5" />
                <path v-for="(d, i) in holes" :key="'h' + i" :d="d" fill="#fff" />
                <path v-for="(d, i) in lines" :key="'l' + i" :d="d" fill="none" stroke="#a4a4a4" stroke-width="2.700" />
                <path v-for="(d, i) in nations" :key="'w' + i" :d="d" fill="none" stroke="#f1f1f1" stroke-width="12" />
                <path v-for="(d, i) in nations" :key="'n' + i" :d="d" fill="none" stroke="#8f8f8f" stroke-width="4" />
                <path d="M1020 745h14v10l-8 4-8-6zM1026 802l8-6-2 10zM2272 1302l8-5h18l2 6-10 8h-18z" fill="#8d8d8d" />
              </g>
              <g class="place"><text v-for="q in places" :key="q[0]" :x="q[1]" :y="q[2]" :textLength="q[3]" lengthAdjust="spacingAndGlyphs" :class="{ large: q[0] === 'Indonesia' }">{{ q[0] }}</text></g>
              <g v-for="(q, i) in dots" :key="'d' + i">
                <rect v-if="q[0]" :x="q[1] - q[3] / 2 - 2" :y="q[2] + 8" :width="q[3] + 4" height="16" fill="#eeeeee" opacity=".92" />
                <text v-if="q[0]" class="lab" :x="q[1] - q[3] / 2" :y="q[2] + 20" :textLength="q[3]">{{ q[0] }}</text>
                <circle :cx="q[1]" :cy="q[2]" r="5.200" fill="#4e79a7" stroke="#fff" stroke-width=".6" />
              </g>
              <text class="copy" x="388" y="659" textLength="164">© 2021 Mapbox © OpenStreetMap</text>
            </svg>
            <div class="mapctl">
              <span class="box"><svg class="ic s16"><use href="#mag" /></svg></span>
              <span class="box tall">
                <svg class="ic s16"><path d="M3 8h10M8 3v10" stroke-width="2" /></svg>
                <svg class="ic s16"><path d="M3 8h10" stroke-width="2" /></svg>
                <span class="pinbtn"><svg class="ic s22"><use href="#pin" /></svg></span>
                <i class="hl"></i>
                <svg class="ic s16"><path d="M5 3l6 5-6 5z" fill="#555" stroke="none" /></svg>
              </span>
            </div>
            <span class="unknown"><span v-fit="69">2 unknown</span></span>
          </div>
        </div>
      </section>
    </main>

    <footer class="tabs">
      <span class="tab src"><svg class="srcic" viewBox="0 0 9 12"><path d="M1 2.500v7c0 2.500 7 2.500 7 0v-7" /><ellipse cx="4.500" cy="2.500" rx="3.500" ry="1.700" /></svg><span v-fit="63">Data Source</span></span>
      <span v-for="n in sheets" :key="n" class="tab sheet-tab" :class="{ active: n === 4 }"><span v-fit="n === 4 ? 44 : 37.500">Sheet {{ n }}</span></span>
      <span class="tab dash"><svg class="ic s12"><use href="#grid4" /></svg><span v-fit="66">Dashboard 1</span></span>
      <span class="tab story"><svg class="ic s12"><use href="#book" /></svg><span v-fit="36">Story 1</span></span>
      <span class="tab add"><svg class="ic s16" viewBox="0 0 16 16"><path d="M8 12.500H1.500v-11h11V7M5 10V7M7.500 10V5M10 8V6M12 8.500v7M8.500 12h7" /></svg></span>
      <span class="tab add"><svg class="ic s16" viewBox="0 0 16 16"><path d="M8 11.500H1.500v-10h10V7M6.500 1.500v10M1.500 6.500h10M12 8.500v7M8.500 12h7" /></svg></span>
      <span class="tab add"><svg class="ic s16" viewBox="0 0 16 16"><path d="M6.500 12L1.500 10.500v-9L6.500 3l5-1.500V8M6.500 3v9M12 8.500v7M8.500 12h7" /></svg></span>
    </footer>
    <div class="status">
      <span class="st1"><span v-fit="45">23 marks</span></span><span class="st2"><span v-fit="94">1 row by 1 column</span></span><span class="st3"><span v-fit="118">SUM(Cook Time): 8,805</span></span>
      <i class="cell c127"></i><i class="cell c27"></i><i class="cell c27"></i><i class="cell c47"></i>
      <i class="cell c71"><svg viewBox="0 0 71 20"><path d="M9 6.500h1v7H9zM15 6.500v7L11 10zM30 6.500v7L26 10zM42 6.500v7l4-3.500zM57 6.500v7l4-3.500zM61.500 6.500h1v7h-1z" fill="#b4b4b4" /></svg></i>
      <i class="cell c68"><svg viewBox="0 0 68 20"><path d="M8 5h3v3H8zM12.500 5h3v3h-3zM17 5h3v3h-3zM8 9h3v3H8zM12.500 9h3v3h-3zM17 9h3v3h-3zM8 13h3v2.500H8zM12.500 13h3v2.500h-3zM17 13h3v2.500h-3zM29 5h11v6H29zM29 12.500h3v3h-3zM33 12.500h3v3h-3zM37 12.500h3v3h-3z" fill="#b8b8b8" /><path d="M50 4.500h11v11H50z" fill="#666" /></svg></i>
    </div>

    <div class="taskbar">
      <span class="start"><svg viewBox="0 0 16 16"><path d="M0 2.200l6.500-1v6.300H0zM7.300 1L16 0v7.500H7.300zM0 8.300h6.500v6.400L0 13.800zM7.300 8.300H16V16l-8.700-1.200z" /></svg></span>
      <div class="tsearch"><svg viewBox="0 0 17 17"><circle cx="10.500" cy="6" r="5" /><path d="M6.800 9.500L.8 15.800" /></svg><span v-fit="128">Type here to search</span></div>
      <span class="tb"><svg viewBox="0 0 24 24"><circle cx="12" cy="12" r="6.700" fill="none" stroke="#000" stroke-width="2" /></svg></span>
      <span class="tb"><svg viewBox="0 0 24 24" fill="none" stroke="#111" stroke-width="1.200"><path d="M4.500 4v2.500h10V4M4.500 19v-2.500h10V19M4.500 9h10v5h-10zM18.500 4v4M18.500 12v7" /><path d="M17.500 8.500h3v3h-3z" fill="#000" /></svg></span>
      <span v-for="a in apps" :key="a[0]" class="app" :class="[a[0], { run: a[1] }]">
        <svg v-if="a[0] !== 'tableau'"><use :href="'#' + a[0]" /></svg>
        <span v-else class="appicon large"><svg class="ic s22"><use href="#logoblue" /></svg></span>
        <em v-if="a[0] === 'whatsapp'">1</em>
      </span>
      <div class="tray">
        <svg class="trayic" viewBox="0 0 64 20"><path d="M1.500 13l5.500-5.500 5.500 5.500M23.500 8h2.500l3.500-3v11L26 13h-2.500zM32 7.500c1.500 1.500 1.500 4 0 5.500M34.500 6c2.500 2.500 2.500 6.500 0 9M37 4.500c3.200 3.500 3.200 8.500 0 12M52 6.500h9v8h-11v-4M62.500 9v3M47 4v3M50 4v3M46 7h5v2.500h-5zM48.500 10v5" /><path d="M53 8.500h5v4.500h-5z" fill="#111" /></svg>
        <span class="eng"><span v-fit="23">ENG</span></span>
        <span class="clock"><span v-fit="28">09:47</span><span v-fit="58">06-01-2021</span></span>
        <svg class="note" viewBox="0 0 18 18"><path d="M1 1.500h16v12.500h-5L9 17 6 14H1z" /></svg>
        <i class="peek"></i>
      </div>
    </div>

    <aside class="showme">
      <div class="smtab"><svg viewBox="0 0 14 15"><path d="M0 0h11v3H0z" fill="#8a6f9b" /><path d="M0 4h14v3H0z" fill="#7fa3cf" /><path d="M0 8h5v3H0z" fill="#f4a678" /><path d="M0 12h8v3H0z" fill="#ff7183" /></svg><span v-fit="54">Show Me</span></div>
      <div class="smbody">
        <div class="thumbs">
          <div v-for="n in 24" :key="n" class="thumb" :class="{ sel: n === 4 }">
            <svg viewBox="0 0 168 126">
              <rect v-for="(r, i) in rects[n - 1] || []" :key="'r' + i" :x="r[0]" :y="r[1]" :width="r[2]" :height="r[3]" :fill="r[4]" />
              <polygon v-for="(a, i) in areas[n - 1] || []" :key="'a' + i" :points="a[0]" :fill="a[1]" />
              <g v-if="n === 1"><rect x="10" y="8" width="147" height="107" fill="none" stroke="#b4b4b4" stroke-width="3" /><g class="tiny" fill="#8f8f8f"><text x="52" y="31">1234</text><text x="104" y="31">678</text><text x="52" y="59">368</text><text x="104" y="59">3044</text><text x="52" y="85">2620</text><text x="104" y="85">2559</text><text x="52" y="110">971</text><text x="104" y="110">322</text></g></g>
              <g v-if="n === 3"><rect x="10" y="8" width="147" height="107" fill="none" stroke="#e4e4e4" stroke-width="3" /><g class="tiny" fill="#b9d2c7"><text x="48" y="31">1234</text><text x="106" y="31">546</text><text x="48" y="61">368</text><text x="106" y="61">340</text><text x="48" y="91">2620</text><text x="106" y="91">53890</text></g></g>
              <template v-if="n === 4 || n === 5">
                <path v-for="d in continents" :key="d" :d="d" :fill="n === 4 ? '#dcdcdc' : '#e06358'" />
                <path v-for="(d, i) in continents2" :key="d" :d="d" :fill="n === 4 ? '#dcdcdc' : i === 2 ? '#e06358' : '#ff9e99'" />
              </template>
              <g v-if="n === 6"><circle cx="84" cy="63" r="43" :fill="L" /><path d="M84 63H41A43 43 0 0 1 84 20z" :fill="P" /><path d="M84 63V20A43 43 0 0 1 115 33z" :fill="p" /><path d="M84 63L115 33A43 43 0 0 1 115 93z" :fill="B" /></g>
              <path v-if="n === 12 || n === 14" d="M84 3v120" stroke="#eaeaea" stroke-width="3" />
              <g v-if="n === 15 || n === 18"><path v-for="t in ticks" :key="t" :d="`M9 ${t}h8M152 ${t}h8`" stroke="#e8e8e8" stroke-width="2.500" /></g>
              <polyline v-for="(s, i) in strokes[n - 1] || []" :key="'s' + i" :points="s[0]" fill="none" :stroke="s[1]" stroke-width="4.500" />
              <circle v-for="(c, i) in rings[n - 1] || []" :key="'c' + i" :cx="c[0]" :cy="c[1]" :r="c[2]" fill="none" :stroke="c[3]" stroke-width="3.600" />
              <circle v-for="(c, i) in discs[n - 1] || []" :key="'f' + i" :cx="c[0]" :cy="c[1]" :r="c[2]" :fill="c[3]" />
              <g v-if="n === 19"><path v-for="(c, i) in crosses" :key="i" :d="`M${c[0] - 13} ${c[1]}h26M${c[0]} ${c[1] - 13}v26`" :stroke="G" stroke-width="3" /></g>
              <path v-if="n === 21" d="M30 30v70M23 30h15M23 99h15M66 24v81M59 24h15M59 105h15M102 21v87M95 21h15M95 108h15M138 15v96M131 15h15M131 111h15" stroke="#bdbdbd" stroke-width="3" fill="none" />
            </svg>
          </div>
        </div>
        <p class="try"><span v-fit="108">For <b>symbol maps</b> try</span></p>
        <p class="need"><span v-fit="29">1 geo</span><svg class="ic s12 geo"><use href="#globe" /></svg><span class="pill dim-pill"><span v-fit="59">Dimension</span></span></p>
        <p class="need"><span v-fit="51">0 or more</span><span class="pill dim-pill"><span v-fit="64">Dimensions</span></span></p>
        <p class="need"><span v-fit="29">0 to 2</span><span class="pill"><span v-fit="52">Measures</span></span></p>
        <p class="hint"><span v-fit="142">May use spatial measure in</span><span v-fit="124">place of geo dimension</span></p>
      </div>
    </aside>
  </div>
</template>

<style>
html, body { margin: 0; overflow: hidden; }
</style>

<style scoped>
* { box-sizing: border-box; }
.screen { position: relative; width: 1366px; height: 768px; display: flex; flex-direction: column; overflow: hidden; background: #fff; color: #111; font: 11.5px/16px "Open Sans", "Noto Sans", sans-serif; white-space: nowrap; }
.defs { position: absolute; width: 0; height: 0; }
.ic { display: block; fill: none; stroke: currentColor; stroke-width: 1; flex: none; overflow: visible; }
.s12 { width: 12px; height: 12px; } .s13 { width: 13px; height: 13px; } .s14 { width: 14px; height: 14px; } .s15 { width: 15px; height: 15px; }
.s16 { width: 16px; height: 16px; } .s22 { width: 22px; height: 22px; } .s24 { width: 24px; height: 24px; }
.tri { width: 0; height: 0; border: 3px solid transparent; border-top: 3px solid #666; border-bottom: 0; }
.tri.big { border-width: 4px 3.5px 0; }
.titlebar { height: 23px; display: flex; align-items: center; padding-left: 2px; flex: none; }
.appicon { width: 16px; height: 16px; margin-right: 4.500px; background: #fff; box-shadow: 1px 1px 1px #aaa; display: grid; place-items: center; }
.winctl { width: 116px; height: 22px; margin-left: auto; margin-right: 10px; fill: none; stroke: #111; }
.menubar { height: 20px; display: flex; gap: 16px; padding: 3px 0 0 8px; flex: none; }
.menu { flex: none; }
.toolbar { height: 41px; flex: none; display: flex; align-items: center; background: #f4f4f4; color: #666; }
.tool { height: 30px; display: flex; align-items: center; justify-content: center; flex: none; }
.tool.dim { color: #bdbdbd; }
.tool.dim .tri { border-top-color: #b5b5b5; }
.tool.on { background: #e5e5e5; }
.tool.sep { height: 35px; background: #d4d4d4; }
.tool.combo { height: 23px; border: 1px solid #cfcfcf; border-radius: 2px; justify-content: flex-end; padding-right: 5px; }
.tool.combo .tri { border-top-color: #ccc; border-width: 4px 3.5px 0; }
.work { height: 593px; flex: none; display: flex; background: #f4f4f4; }
.side { width: 210px; background: #fff; border-right: 1px solid #d2d2d2; display: flex; flex-direction: column; flex: none; border-top: 1px solid #d4d4d4; }
.sidetabs { height: 26px; display: flex; font-size: 12px; }
.tabdata { width: 78px; padding: 5px 0 0 18px; }
.tabana { flex: 1; background: #fafafa; border-left: 1px solid #d4d4d4; border-bottom: 1px solid #d4d4d4; padding: 5px 8px 0 12px; display: flex; }
.updown { width: 6px; height: 8px; margin: 3px 0 0 auto; fill: #5d7f92; }
.source { height: 30px; border-bottom: 1px solid #e2e2e2; display: flex; align-items: center; gap: 6px; padding-left: 22px; color: #333; }
.db { width: 15px; height: 16px; margin-right: -1px; fill: none; stroke: #666; }
.searchrow { height: 39px; display: flex; align-items: center; padding-left: 8px; }
.search { width: 130px; height: 23px; border: 1px solid #c6c6c6; border-radius: 2px; color: #999; display: flex; justify-content: space-between; align-items: center; padding: 0 5px 0 7px; }
.search .ic { color: #555; }
.funnel { width: 14px; height: 14px; margin: 0 5px 0 4px; fill: none; stroke: #666; }
.vr { width: 1px; height: 18px; background: #ccc; }
.listic { width: 13px; height: 10px; margin: 0 8px 0 6px; stroke: #666; }
.tables { height: 22px; padding: 2px 0 0 18px; font-size: 12px; }
ul { list-style: none; margin: 0; padding: 0; }
.fields li { height: 21px; display: flex; align-items: center; font-size: 11.5px; color: #111; }
.kind { width: 26px; margin-left: 21px; height: 16px; display: flex; align-items: center; font-size: 9px; }
.kind .ic { margin-left: 2px; }
.blue .kind { color: #3f86a8; } .green .kind { color: #44a883; }
.it { font-style: italic; }
hr { width: 188px; height: 1px; border: 0; background: #dcdcdc; margin: 0 0 1px 15px; }
.cards-col { width: 154px; margin-left: 6px; flex: none; display: flex; flex-direction: column; gap: 6px; color: #333; }
.card { border: 1px solid #d2d2d2; background: #fafafa; padding: 7px 6px 0; }
.pages { height: 64px; } .filters { height: 80px; } .marks { height: 233px; }
.select { margin-top: 12px; height: 21px; border: 1px solid #c4c4c4; display: flex; align-items: center; }
.ring { width: 9px; height: 9px; border: 1px solid #888; border-radius: 50%; margin: 0 8px 0 12px; }
.drop { margin-left: auto; width: 18px; height: 19px; border-left: 1px solid #dcdcdc; display: grid; place-items: center; }
.markgrid { margin-top: 6px; display: grid; grid-template-columns: 43px 42px 43px; gap: 6px; color: #111; }
.mark { height: 42px; border: 1px solid #d0d0d0; background: #fff; display: flex; flex-direction: column; align-items: center; padding-top: 6px; gap: 5px; }
.mark .ic { color: #555; }
.enc { display: flex; align-items: center; justify-content: flex-end; gap: 5px; height: 21px; margin: 0 4px 3px 0; color: #666; }
.markgrid + .enc { margin-top: 9px; }
.enc .pill { width: 111px; padding: 0 10.500px; }
.pill { height: 21px; border-radius: 11px; background: #00b180; color: #fff; display: inline-flex; align-items: center; padding: 0 11px; font-size: 11.700px; }
.pill.dim-pill { background: #4996b2; }
.viewcol { width: 984px; margin-left: 6px; display: flex; flex-direction: column; flex: none; }
.shelf { height: 29px; margin-bottom: 6px; width: 990px; border: 1px solid #d2d2d2; background: #fafafa; display: flex; align-items: center; color: #333; }
.shelf .pill { width: 156px; margin-left: 2px; }
.shelfname { width: 125px; height: 100%; border-right: 1px solid #d2d2d2; display: flex; align-items: center; gap: 7px; padding-left: 6px; }
.sh { width: 12px; height: 12px; stroke: #555; stroke-width: 1.700; fill: none; }
.sheet { height: 517px; border: 1px solid #b2b2b2; background: #fff; padding: 0 5px; }
h1 { margin: 0; height: 43px; font-size: 20px; line-height: 50px; font-weight: 300; color: #333; padding-left: 4.500px; }
.map { position: relative; width: 973px; height: 467px; border: 1px solid #e2e2e2; overflow: hidden; }
.canvas { display: block; width: 971px; height: 465px; }
.place text { font: 600 12px "Open Sans", sans-serif; fill: #999; stroke: #ededed; stroke-width: 2px; paint-order: stroke; }
.place text.large { font-size: 15px; fill: #8f8f8f; }
.lab { font-size: 12px; fill: #222; }
.copy { font: 11px "Liberation Sans", sans-serif; fill: #444; }
.mapctl { position: absolute; left: 9px; top: 9px; display: flex; flex-direction: column; gap: 9px; color: #555; }
.box { width: 28px; height: 28px; border: 1px solid #b8b8b8; background: #f7f7f7; display: flex; flex-direction: column; align-items: center; padding-top: 5px; }
.box.tall { height: 110px; gap: 9px; }
.pinbtn { width: 22px; height: 22px; margin-top: -3px; background: #e0e0e0; border: 1px solid #b0b0b0; display: grid; place-items: center; }
.hl { width: 20px; height: 1px; background: #ccc; margin: -4px 0 -2px; }
.unknown { position: absolute; left: 880px; top: 441px; width: 85px; height: 19px; background: rgba(130, 130, 130, .72); border-radius: 3px; color: #fff; font: 700 12px/19px "Open Sans", sans-serif; padding-left: 7px; }
.tabs { height: 31px; flex: none; display: flex; background: #e6e6e6; border-top: 1px solid #cacaca; border-bottom: 1px solid #cfcfcf; color: #555; }
.tab { border-right: 1px solid #c8c8c8; display: flex; align-items: center; }
.src { width: 131px; padding-left: 9px; gap: 6px; }
.srcic { width: 9px; height: 12px; fill: none; stroke: #666; }
.sheet-tab { width: 56px; padding-left: 6.500px; }
.sheet-tab.active { background: #fbfbfb; font-weight: 700; padding-left: 5.500px; color: #444; }
.dash { width: 101px; padding-left: 7px; gap: 5px; }
.story { width: 71px; padding-left: 7px; gap: 4.500px; }
.add { width: 32px; justify-content: center; }
.add .ic { stroke-width: 1.300; }
.status { height: 20px; flex: none; display: flex; background: #ebebeb; align-items: center; color: #000; }
.st1 { width: 66px; padding-left: 3px; } .st2 { width: 115px; padding-left: 3px; } .st3 { width: 818px; padding-left: 3px; }
.cell { height: 20px; border-left: 1px solid #c8c8c8; flex: none; }
.cell svg { display: block; height: 20px; }
.c127 { width: 127px; } .c27 { width: 27px; } .c47 { width: 47px; } .c71 { width: 71px; } .c68 { width: 68px; }
.c71 svg { width: 71px; } .c68 svg { width: 68px; }
.taskbar { height: 40px; flex: none; display: flex; background: #d5d5d5; }
.start { width: 49px; display: grid; place-items: center; }
.start svg { width: 16px; height: 16px; }
.tsearch { width: 343px; height: 39px; margin-top: 1px; background: #fff; border: 1px solid #c6c6c6; border-width: 0 1px 1px 0; display: flex; align-items: center; padding-left: 11px; gap: 11px; font-size: 14px; color: #333; }
.tsearch svg { width: 17px; height: 17px; fill: none; stroke: #111; stroke-width: 1.300; }
.tb { width: 48px; height: 40px; display: grid; place-items: center; }
.tb svg { width: 24px; height: 24px; }
.tb + .tb + .app { margin-left: 2px; }
.app { position: relative; width: 49px; height: 40px; display: grid; place-items: center; }
.app > svg { width: 24px; height: 24px; }
.app.folder > svg, .app.chrome > svg, .app.jupyter > svg { width: 22px; height: 22px; }
.app.run { background: linear-gradient(#cb6b2b, #cb6b2b) center bottom / 40px 2px no-repeat; }
.app.run.tableau { background: linear-gradient(#cb6b2b, #cb6b2b) center bottom / 48px 2px no-repeat #efefef; }
.appicon.large { width: 22px; height: 22px; margin: 0; background: #fafafa; }
.app em { position: absolute; left: 26px; top: 18px; font: 13px/16px "Open Sans", sans-serif; color: #fff; }
.tray { margin-left: auto; display: flex; align-items: center; width: 226px; }
.trayic { width: 64px; height: 20px; fill: none; stroke: #111; stroke-width: 1.200; }
.eng { width: 40px; padding-left: 9px; font-size: 12px; }
.clock { width: 67px; display: flex; flex-direction: column; align-items: center; gap: 2px; padding: 0 0 1px 1px; }
.note { width: 18px; height: 18px; margin-left: 13px; fill: none; stroke: #111; stroke-width: 1.200; }
.peek { width: 1px; height: 40px; background: #aaa; margin-left: auto; margin-right: 4px; }
.showme { position: absolute; left: 1158px; top: 48px; width: 204px; filter: drop-shadow(2px 2px 2px rgba(0, 0, 0, .35)); display: flex; flex-direction: column; align-items: flex-end; }
.smtab { width: 110px; height: 37px; background: #fafafa; border: 1px solid #e0e0e0; border-width: 1px 0 0 1px; display: flex; align-items: center; gap: 6px; padding: 0 0 4px 11px; font-size: 13px; color: #000; margin-bottom: -1px; z-index: 1; }
.smtab svg { width: 14px; height: 15px; }
.smbody { width: 204px; height: 556px; background: #fafafa; border: 1px solid #dcdcdc; border-right: 0; padding: 14px 0 0 13px; }
.thumbs { display: grid; grid-template-columns: 56px 56px 56px; grid-auto-rows: 42px; gap: 4px; }
.thumb { width: 56px; height: 42px; background: #fff; border: 1px solid #e0e0e0; }
.thumb svg { display: block; width: 56px; height: 42px; margin: -1px; }
.thumb.sel { border: 2px solid #dc6a30; }
.thumb.sel svg { margin: -2px; }
.tiny { font: 16px "Liberation Serif", serif; }
p { margin: 0; color: #111; }
.try { margin: 18px 0 7px 2px; height: 16px; }
.need { height: 21px; margin: 0 0 8px 2px; display: flex; align-items: center; gap: 3px; }
.need .pill { padding: 0 11px; }
.geo { margin: 0 2px 0 5px; color: #777; }
.hint { display: flex; flex-direction: column; align-items: flex-start; line-height: 15px; color: #888; margin: 11px 0 0 2px; }
</style>
